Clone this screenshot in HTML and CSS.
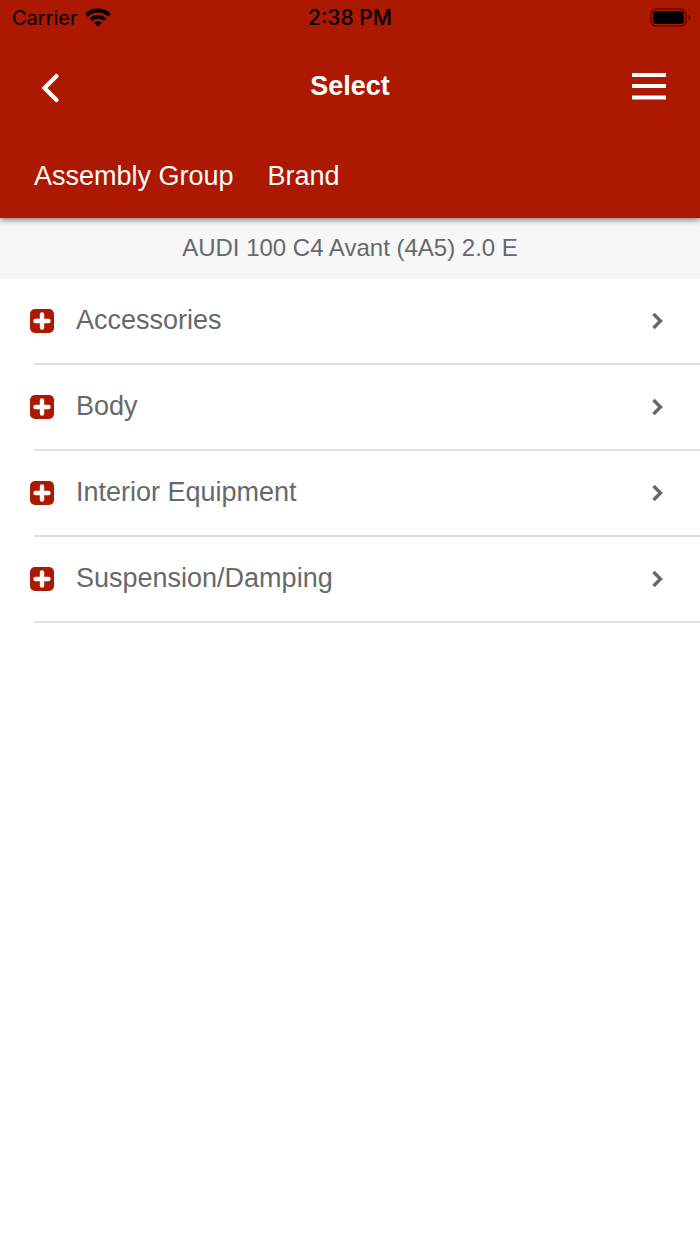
FILE: index.html
```html
<!DOCTYPE html>
<html lang="en">
<head>
<meta charset="utf-8">
<meta name="viewport" content="width=device-width, initial-scale=1">
<title>Select</title>
<link rel="stylesheet" href="styles.css">
</head>
<body>
<header class="header">
  <div class="status">
    <div class="carrier">
      <span>Carrier</span>
      <svg class="wifi" viewBox="0 0 26 20" aria-hidden="true">
        <path d="M1.500 7.200a16.400 16.400 0 0 1 23 0" fill="none" stroke="currentColor" stroke-width="4"/>
        <path d="M6 11.700a10 10 0 0 1 14 0" fill="none" stroke="currentColor" stroke-width="3.600"/>
        <path d="M13 18.600l-4-4a5.700 5.700 0 0 1 8 0z" fill="currentColor"/>
      </svg>
    </div>
    <time class="time">2:38 PM</time>
    <svg class="battery" viewBox="0 0 42 20" role="img" aria-label="Battery full">
      <rect x="1" y="1" width="35" height="17" rx="5" fill="none" stroke="#000" stroke-opacity=".45" stroke-width="1.5"/>
      <rect x="3" y="3" width="31" height="13" rx="3" fill="#000"/>
      <path d="M38.5 6.5c2.6 1 2.6 5 0 6z" fill="#000" fill-opacity=".5"/>
    </svg>
  </div>
  <div class="bar">
    <button class="icon-button" type="button" aria-label="Back">
      <svg class="back" viewBox="0 0 20 30" aria-hidden="true"><path d="M16.500 3L4.500 15l12 12" fill="none" stroke="currentColor" stroke-width="4.200" stroke-linecap="round" stroke-linejoin="miter"/></svg>
    </button>
    <h1 class="title">Select</h1>
    <button class="icon-button menu-button" type="button" aria-label="Menu">
      <svg class="menu" viewBox="0 0 34 28" aria-hidden="true"><path d="M0 3h34M0 14h34M0 25.500h34" stroke="currentColor" stroke-width="4"/></svg>
    </button>
  </div>
  <nav class="tabs">
    <a class="tab" href="#assembly-group">Assembly Group</a>
    <a class="tab" href="#brand">Brand</a>
  </nav>
</header>
<main>
  <p class="vehicle">AUDI 100 C4 Avant (4A5) 2.0 E</p>
  <ul class="list" id="assembly-group">
    <li><a class="row" href="#accessories"><svg class="plus" viewBox="0 0 24 24" aria-hidden="true"><rect width="24" height="24" rx="5" fill="#ad1800"/><path d="M12 5.500v13M5.500 12h13" stroke="#fff" stroke-width="4.400" stroke-linecap="round"/></svg><span class="label">Accessories</span><svg class="chevron" viewBox="0 0 14 18" aria-hidden="true"><path d="M2.500 2l7 7-7 7" fill="none" stroke="currentColor" stroke-width="3.400"/></svg></a></li>
    <li><a class="row" href="#body"><svg class="plus" viewBox="0 0 24 24" aria-hidden="true"><rect width="24" height="24" rx="5" fill="#ad1800"/><path d="M12 5.500v13M5.500 12h13" stroke="#fff" stroke-width="4.400" stroke-linecap="round"/></svg><span class="label">Body</span><svg class="chevron" viewBox="0 0 14 18" aria-hidden="true"><path d="M2.500 2l7 7-7 7" fill="none" stroke="currentColor" stroke-width="3.400"/></svg></a></li>
    <li><a class="row" href="#interior"><svg class="plus" viewBox="0 0 24 24" aria-hidden="true"><rect width="24" height="24" rx="5" fill="#ad1800"/><path d="M12 5.500v13M5.500 12h13" stroke="#fff" stroke-width="4.400" stroke-linecap="round"/></svg><span class="label">Interior Equipment</span><svg class="chevron" viewBox="0 0 14 18" aria-hidden="true"><path d="M2.500 2l7 7-7 7" fill="none" stroke="currentColor" stroke-width="3.400"/></svg></a></li>
    <li><a class="row" href="#suspension"><svg class="plus" viewBox="0 0 24 24" aria-hidden="true"><rect width="24" height="24" rx="5" fill="#ad1800"/><path d="M12 5.500v13M5.500 12h13" stroke="#fff" stroke-width="4.400" stroke-linecap="round"/></svg><span class="label">Suspension/Damping</span><svg class="chevron" viewBox="0 0 14 18" aria-hidden="true"><path d="M2.500 2l7 7-7 7" fill="none" stroke="currentColor" stroke-width="3.400"/></svg></a></li>
  </ul>
</main>
</body>
</html>
```
FILE: styles.css
```css
* { box-sizing: border-box; }

body {
  margin: 0;
  background: #fff;
  color: #66696c;
  font-family: "Liberation Sans", Arial, sans-serif;
  font-size: 27px;
  line-height: 32px;
}

.header {
  position: relative;
  background: #ad1800;
  color: #fff;
  box-shadow: 0 2px 6px rgba(0, 0, 0, 0.5);
}

.status {
  display: grid;
  grid-template-columns: 1fr auto 1fr;
  align-items: center;
  height: 36px;
  padding: 0 8px 0 12px;
  color: #000;
  font-family: Inter, "Liberation Sans", sans-serif;
  font-size: 20px;
  line-height: 24px;
}

.carrier { display: flex; align-items: center; gap: 7px; }
.wifi { width: 26px; height: 20px; }
.time { padding-right: 4px; font-size: 21px; font-weight: 500; }
.battery { width: 42px; height: 20px; justify-self: end; }

.bar {
  display: grid;
  grid-template-columns: 1fr auto 1fr;
  align-items: center;
  height: 100px;
  padding: 0 34px;
}

.icon-button {
  display: flex;
  justify-self: start;
  padding: 4px 6px 0;
  border: 0;
  background: none;
  color: inherit;
}

.menu-button { justify-self: end; padding: 0; }
.back { width: 20px; height: 30px; }
.menu { width: 34px; height: 28px; }
.title { margin: 0; font-size: 27px; font-weight: 700; }

.tabs { display: flex; gap: 34px; padding: 24px 34px 26px; }
.tab { color: inherit; text-decoration: none; }

.vehicle {
  margin: 0;
  padding: 14px 34px 15px;
  background: #f7f7f7;
  font-size: 24px;
  text-align: center;
}

.list { margin: 0; padding: 0; list-style: none; }

.row {
  display: flex;
  align-items: center;
  height: 86px;
  padding: 0 35px 2px 30px;
  background: linear-gradient(#e0e0e0, #e0e0e0) 34px 100% / 100% 2px no-repeat;
  color: inherit;
  text-decoration: none;
}

.plus { flex: none; width: 24px; height: 24px; }
.label { flex: 1; margin-left: 22px; padding-bottom: 2px; }
.chevron { flex: none; width: 14px; height: 18px; }
```
